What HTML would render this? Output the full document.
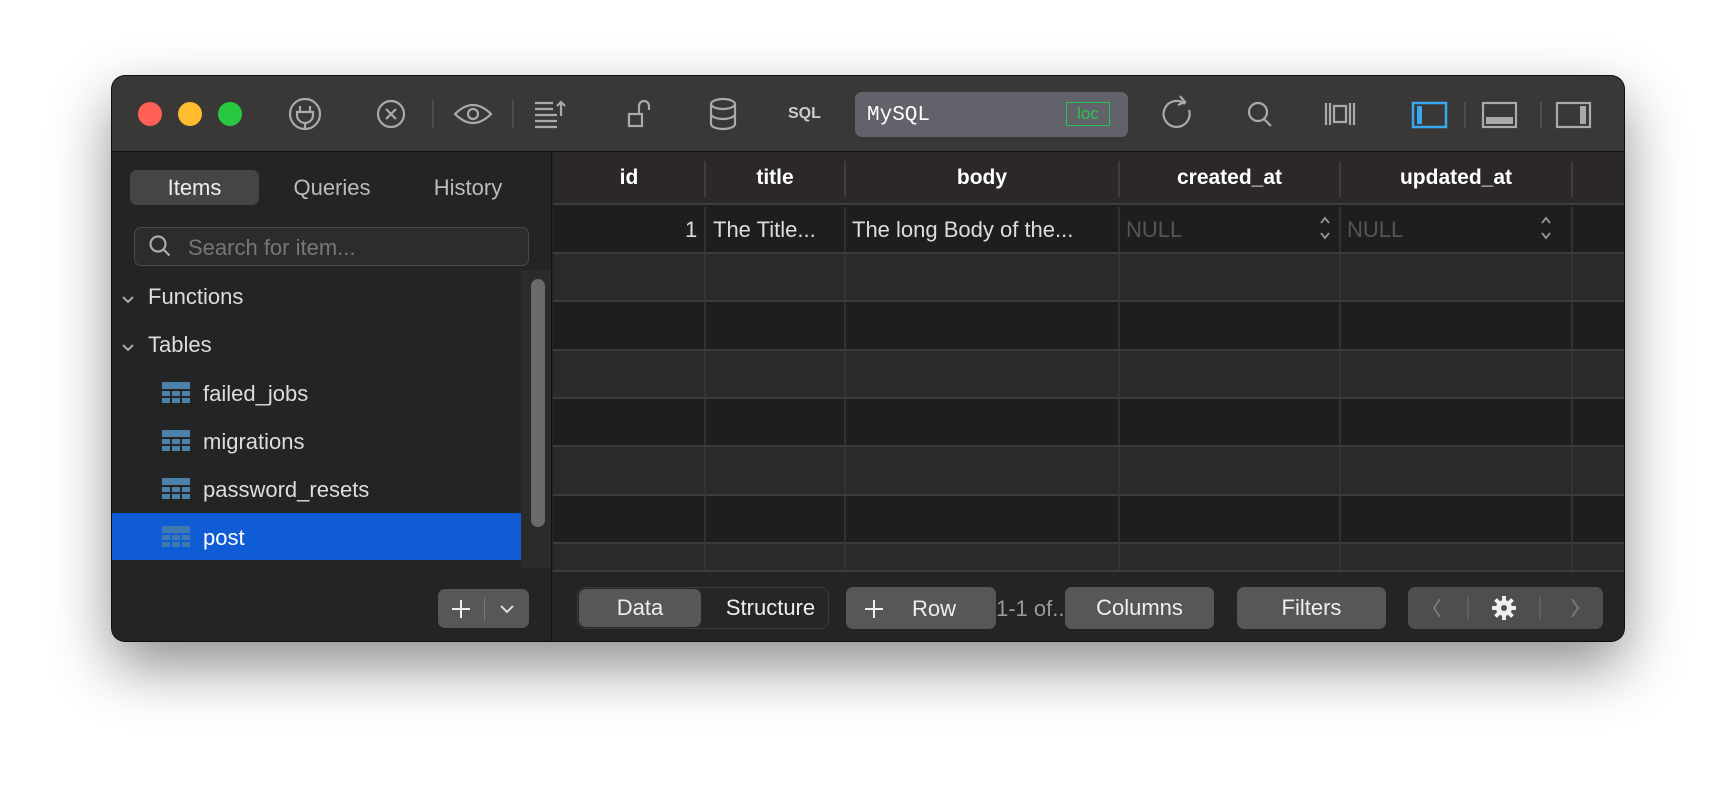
<!DOCTYPE html>
<html><head><meta charset="utf-8"><style>
*{margin:0;padding:0;box-sizing:border-box}
body{width:1736px;height:790px;background:#fff;font-family:"Liberation Sans",sans-serif;position:relative;overflow:hidden}
.a{position:absolute}
#win{left:112px;top:76px;width:1512px;height:565px;border-radius:13px;background:#242424;box-shadow:0 25px 60px rgba(0,0,0,.45),0 0 0 1px #111;overflow:hidden}
.tb{left:0;top:0;width:1512px;height:76px;background:#3a3737;border-bottom:1px solid #111}
.dot{width:24px;height:24px;border-radius:50%;top:26px}
.ic{stroke:#aaa;fill:none;stroke-width:2.2}
.t{color:#ddd;font-size:22px;white-space:nowrap}
.hd{color:#fff;font-weight:bold;font-size:21px;text-align:center;top:90px}
.btn{background:#575757;border-radius:7px;color:#eee;font-size:22px;text-align:center;line-height:42px;height:42px;top:511px}
</style></head><body>
<div id="win" class="a">
<div class="a tb">
 <div class="a dot" style="left:26px;background:#fe5f57"></div>
 <div class="a dot" style="left:66px;background:#febc2e"></div>
 <div class="a dot" style="left:106px;background:#28c840"></div>
 <svg class="a" style="left:0;top:0" width="1512" height="76">
  <circle cx="193" cy="38" r="15" class="ic" stroke="#ccc"/>
  <path d="M188 30v6M198 30v6M185 36h16v3a8 8 0 0 1-16 0zM193 46v7" class="ic" stroke="#ccc"/>
  <circle cx="279" cy="38" r="13" class="ic" stroke="#666"/>
  <path d="M274 33l10 10M284 33l-10 10" class="ic" stroke="#666"/>
  <path d="M321 24v28M401 24v28" stroke="#555" stroke-width="1.5"/>
  <path d="M343 38q18-18 36 0q-18 18-36 0z" class="ic" stroke="#777"/><circle cx="361" cy="38" r="5" class="ic" stroke="#777"/>
  <path d="M423 27h18M423 33h18M423 39h22M423 45h22M423 51h22M449 26v14M445 30l4-4 4 4" class="ic" stroke="#666" stroke-width="1.8"/>
  <rect x="517" y="38" width="13" height="12" class="ic"/><path d="M527 38v-8a5 5 0 0 1 10 0v4" class="ic"/>
  <ellipse cx="611" cy="28" rx="12" ry="5" class="ic"/><path d="M599 28v20a12 5 0 0 0 24 0v-20M599 38a12 5 0 0 0 24 0" class="ic"/>
  <path d="M1073 28a13 13 0 1 0 4 6M1068 20l5 6-7 3" class="ic"/>
  <circle cx="1146" cy="36" r="9" class="ic"/><path d="M1152 43l7 7" class="ic"/>
  <path d="M1214 27v22M1218 27v22M1222 30h12v16h-12zM1238 27v22M1242 27v22" class="ic" stroke-width="1.8"/>
  <rect x="1301" y="27" width="33" height="24" stroke="#3aa8f0" stroke-width="2.5" fill="none"/><rect x="1305" y="30" width="5" height="18" fill="#3aa8f0"/>
  <path d="M1353 26v26M1429 26v26" stroke="#555" stroke-width="1.5"/>
  <rect x="1371" y="27" width="33" height="24" class="ic"/><rect x="1374" y="41" width="27" height="7" fill="#aaa"/>
  <rect x="1445" y="27" width="33" height="24" class="ic"/><rect x="1468" y="30" width="6" height="18" fill="#aaa"/>
 </svg>
 <div class="a" style="left:676px;top:29px;font-size:16px;font-weight:bold;color:#ccc">SQL</div>
 <div class="a" style="left:743px;top:16px;width:273px;height:45px;background:#62636a;border-radius:7px"></div>
 <div class="a" style="left:755px;top:28px;font-family:'Liberation Mono',monospace;font-size:21px;color:#fff">MySQL</div>
 <div class="a" style="left:954px;top:26px;width:44px;height:24px;border:1.5px solid #2fc24f;color:#2fc24f;font-size:17px;text-align:center;line-height:21px">loc</div>
</div>
<!-- sidebar -->
<div class="a" style="left:0;top:77px;width:440px;height:488px;background:#242424;border-right:1px solid #111"></div>
<div class="a" style="left:18px;top:94px;width:129px;height:35px;background:#454545;border-radius:7px"></div>
<div class="a t" style="left:18px;width:129px;text-align:center;top:99px;color:#eee">Items</div>
<div class="a t" style="left:160px;width:120px;text-align:center;top:99px;color:#bbb">Queries</div>
<div class="a t" style="left:296px;width:120px;text-align:center;top:99px;color:#bbb">History</div>
<div class="a" style="left:22px;top:151px;width:395px;height:39px;border:1px solid #4a4a4a;background:#2c2c2c;border-radius:7px"></div>
<svg class="a" style="left:36px;top:158px" width="26" height="26"><circle cx="10" cy="10" r="7.5" class="ic" stroke="#ddd"/><path d="M15.5 15.5l6 6" class="ic" stroke="#ddd"/></svg>
<div class="a t" style="left:76px;top:159px;color:#777">Search for item...</div>
<svg class="a" style="left:8px;top:210px" width="30" height="70"><path d="M3 11l5 5 5-5M3 59l5 5 5-5" stroke="#aaa" stroke-width="2" fill="none"/></svg>
<div class="a t" style="left:36px;top:208px">Functions</div>
<div class="a t" style="left:36px;top:256px">Tables</div>
<div class="a" style="left:0;top:437px;width:409px;height:47px;background:#0f5cd4"></div>
<div class="a t" style="left:91px;top:305px">failed_jobs</div>
<div class="a t" style="left:91px;top:353px">migrations</div>
<div class="a t" style="left:91px;top:401px">password_resets</div>
<div class="a t" style="left:91px;top:449px;color:#fff">post</div>
<svg class="a" style="left:50px;top:302px" width="30" height="170">
 <g id="ti" fill="#4a82a8"><rect x="0" y="4" width="28" height="7"/><rect x="0" y="13" width="8" height="5"/><rect x="10" y="13" width="8" height="5"/><rect x="20" y="13" width="8" height="5"/><rect x="0" y="20" width="8" height="5"/><rect x="10" y="20" width="8" height="5"/><rect x="20" y="20" width="8" height="5"/></g>
 <use href="#ti" y="48"/><use href="#ti" y="96"/><use href="#ti" y="144" opacity=".8"/>
</svg>
<div class="a" style="left:409px;top:194px;width:30px;height:298px;background:#2b2b2b"></div>
<div class="a" style="left:419px;top:203px;width:14px;height:248px;background:#6a6a6a;border-radius:7px"></div>
<div class="a" style="left:326px;top:513px;width:91px;height:39px;background:#575757;border-radius:7px"></div>
<div class="a" style="left:372px;top:521px;width:1px;height:24px;background:#777"></div>
<svg class="a" style="left:338px;top:522px" width="22" height="22"><path d="M11 2v18M2 11h18" stroke="#eee" stroke-width="2"/></svg>
<svg class="a" style="left:385px;top:523px" width="20" height="20"><path d="M4 7l6 6 6-6" stroke="#ddd" stroke-width="2" fill="none"/></svg>
<!-- grid -->
<div class="a" style="left:441px;top:77px;width:1071px;height:52px;background:#2c2828;border-bottom:2px solid #3c3c3c"></div>
<div class="a" style="left:441px;top:129px;width:1071px;height:48px;background:#1e1e1e"></div>
<div class="a" style="left:441px;top:177px;width:1071px;height:48px;background:#2a2a2a"></div>
<div class="a" style="left:441px;top:225px;width:1071px;height:49px;background:#1e1e1e"></div>
<div class="a" style="left:441px;top:274px;width:1071px;height:48px;background:#2a2a2a"></div>
<div class="a" style="left:441px;top:322px;width:1071px;height:48px;background:#1e1e1e"></div>
<div class="a" style="left:441px;top:370px;width:1071px;height:49px;background:#2a2a2a"></div>
<div class="a" style="left:441px;top:419px;width:1071px;height:48px;background:#1e1e1e"></div>
<div class="a" style="left:441px;top:467px;width:1071px;height:28px;background:#2a2a2a"></div>
<svg class="a" style="left:441px;top:77px" width="1071" height="420">
 <g stroke="#3c3c3c" stroke-width="2"><path d="M0 100h1071M0 148h1071M0 197h1071M0 245h1071M0 293h1071M0 342h1071M0 390h1071M0 418h1071"/></g>
 <g stroke="#383838" stroke-width="1.5"><path d="M152 54v364M292 54v364M566 54v364M787 54v364M1019 54v364"/></g>
 <g stroke="#4a4444" stroke-width="1.5"><path d="M152 8v36M292 8v36M566 8v36M787 8v36M1019 8v36"/></g>
 <g stroke="#999" stroke-width="1.8" fill="none"><path d="M768 70l4-5 4 5M768 80l4 5 4-5M989 70l4-5 4 5M989 80l4 5 4-5"/></g>
</svg>
<div class="a hd" style="left:441px;width:152px">id</div>
<div class="a hd" style="left:593px;width:140px">title</div>
<div class="a hd" style="left:733px;width:274px">body</div>
<div class="a hd" style="left:1007px;width:221px">created_at</div>
<div class="a hd" style="left:1228px;width:232px">updated_at</div>
<div class="a t" style="left:573px;top:141px">1</div>
<div class="a t" style="left:601px;top:141px">The Title...</div>
<div class="a t" style="left:740px;top:141px">The long Body of the...</div>
<div class="a t" style="left:1014px;top:141px;color:#555">NULL</div>
<div class="a t" style="left:1235px;top:141px;color:#555">NULL</div>
<!-- bottom bar -->
<div class="a" style="left:465px;top:511px;width:252px;height:42px;border:1px solid #3a3a3a;background:#262626;border-radius:8px"></div>
<div class="a btn" style="left:467px;top:513px;width:122px;height:38px;line-height:38px">Data</div>
<div class="a t" style="left:600px;top:519px;width:117px;text-align:center;color:#eee">Structure</div>
<div class="a btn" style="left:734px;width:150px"></div>
<svg class="a" style="left:751px;top:522px" width="22" height="22"><path d="M11 2v18M2 11h18" stroke="#eee" stroke-width="2"/></svg>
<div class="a t" style="left:800px;top:520px;color:#eee">Row</div>
<div class="a t" style="left:884px;top:520px;color:#999">1-1 of...</div>
<div class="a btn" style="left:953px;width:149px">Columns</div>
<div class="a btn" style="left:1125px;width:149px">Filters</div>
<div class="a btn" style="left:1296px;width:195px;background:#4e4e4e"></div>
<svg class="a" style="left:1296px;top:511px" width="195" height="42">
 <path d="M32 12l-6 9 6 9M164 12l6 9-6 9" stroke="#777" stroke-width="2" fill="none"/>
 <path d="M60 10v22M132 10v22" stroke="#666" stroke-width="1.5"/>
 <circle cx="96" cy="21" r="8" fill="#eee"/>
 <g stroke="#eee" stroke-width="4"><path d="M96 9v24M84 21h24M87.5 12.5l17 17M104.5 12.5l-17 17"/></g>
 <circle cx="96" cy="21" r="3" fill="#4e4e4e"/>
</svg>
</div>
</body></html>
